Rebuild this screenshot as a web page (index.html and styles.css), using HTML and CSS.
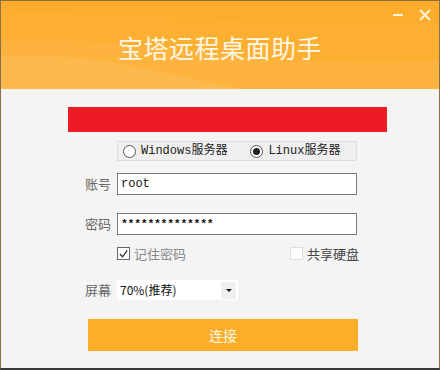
FILE: index.html
```html
<!DOCTYPE html>
<html lang="zh-CN">
<head>
    <meta charset="UTF-8">
    <title>宝塔远程桌面助手</title>
    <link rel="stylesheet" href="styles.css">
</head>
<body>
    <div class="window">
        <div class="header">
            <svg class="waves" width="438" height="88" viewBox="0 0 438 88">
                <path d="M0 40 C 120 30, 260 70, 438 60 L438 88 L0 88 Z" fill="rgba(255,255,255,0.06)"/>
                <path d="M0 55 C 90 50, 170 75, 240 88 L0 88 Z" fill="rgba(255,255,255,0.08)"/>
                <path d="M0 10 C 150 10, 300 30, 438 20 L438 88 L0 88 Z" fill="rgba(255,255,255,0.03)"/>
            </svg>
            <div class="win-controls">
                <span class="win-min"></span>
                <svg class="win-close" width="12" height="12" viewBox="0 0 12 12">
                    <path d="M1 1 L11 11 M11 1 L1 11" stroke="#fff5dc" stroke-width="2"/>
                </svg>
            </div>
            <h1>宝塔远程桌面助手</h1>
        </div>

        <div class="content">
            <div class="red-bar"></div>

            <div class="row">
                <div class="server-group">
                    <label class="radio"><span class="radio-dot"></span>Windows服务器</label>
                    <label class="radio"><span class="radio-dot checked"></span>Linux服务器</label>
                </div>
            </div>

            <div class="row field-user">
                <span class="label">账号</span>
                <div class="input">root</div>
            </div>

            <div class="row field-pass">
                <span class="label">密码</span>
                <div class="input stars">**************</div>
            </div>

            <div class="row options">
                <label class="check"><span class="box checked">
                    <svg width="12" height="12" viewBox="0 0 12 12"><path d="M2 6 L5 9 L10 2" stroke="#333" stroke-width="1.4" fill="none"/></svg>
                </span>记住密码</label>
                <label class="check share"><span class="box"></span>共享硬盘</label>
            </div>

            <div class="row field-screen">
                <span class="label">屏幕</span>
                <div class="select">
                    <span class="select-text">70%(推荐)</span>
                    <span class="select-arrow"></span>
                </div>
            </div>

            <div class="row">
                <button class="connect">连接</button>
            </div>
        </div>
    </div>
</body>
</html>
```

FILE: styles.css
```css
* {
    margin: 0;
    padding: 0;
    box-sizing: border-box;
}

body {
    font-family: "Noto Sans CJK SC", sans-serif;
    background: #f4f4f4;
}

.window {
    width: 440px;
    height: 370px;
    border: 1px solid #8a7044;
    border-bottom: 2px solid #3a3a3a;
    background: #f4f4f4;
    display: flex;
    flex-direction: column;
}

.header {
    position: relative;
    height: 88px;
    background: #fdad2b;
    display: flex;
    align-items: center;
    justify-content: center;
}

.waves {
    position: absolute;
    left: 0;
    top: 0;
}

.header h1 {
    position: relative;
    color: #fff8e8;
    font-size: 25px;
    font-weight: 400;
    letter-spacing: 0.5px;
    margin-top: 4px;
}

.win-controls {
    position: absolute;
    top: 8px;
    right: 8px;
    display: flex;
    align-items: center;
    gap: 16px;
}

.win-min {
    width: 10px;
    height: 2px;
    background: #fff5dc;
}

.content {
    flex: 1;
    display: flex;
    flex-direction: column;
    padding-top: 18px;
}

.red-bar {
    width: 319px;
    height: 25px;
    margin-left: 67px;
    background: #ed1c24;
}

.row {
    display: flex;
    align-items: center;
    padding-left: 84px;
}

.label {
    width: 32px;
    font-size: 13px;
    line-height: 16px;
    color: #666;
}

.server-group {
    margin-top: 9px;
    margin-left: 32px;
    width: 240px;
    height: 20px;
    background: #efefef;
    border: 1px solid #dcdcdc;
    display: flex;
    align-items: center;
    padding-left: 5px;
    gap: 23px;
    font-family: "Liberation Mono", "Noto Sans CJK SC", monospace;
    font-size: 12px;
    line-height: 14px;
    color: #222;
}

.radio {
    display: flex;
    align-items: center;
    gap: 5px;
}

.radio-dot {
    width: 13px;
    height: 13px;
    border: 1px solid #555;
    border-radius: 50%;
    background: #fff;
    display: flex;
    align-items: center;
    justify-content: center;
}

.radio-dot.checked::after {
    content: "";
    width: 7px;
    height: 7px;
    border-radius: 50%;
    background: #222;
}

.input {
    width: 240px;
    height: 22px;
    background: #fff;
    border: 1px solid #7a7a7a;
    padding-left: 3px;
    font-family: "Liberation Mono", monospace;
    font-size: 12px;
    line-height: 20px;
    color: #111;
}

.stars {
    font-size: 11.5px;
    font-weight: bold;
    letter-spacing: -0.3px;
}

.field-user {
    margin-top: 12px;
}

.field-pass {
    margin-top: 18px;
}

.options {
    margin-top: 12px;
    height: 13px;
    padding-left: 116px;
    width: 358px;
    justify-content: space-between;
    font-size: 13px;
    line-height: 13px;
    color: #888;
}

.check {
    display: flex;
    align-items: center;
    gap: 4px;
}

.share {
    color: #444;
}

.box {
    width: 13px;
    height: 13px;
    border: 1px solid #666;
    background: #fff;
    display: flex;
    align-items: center;
    justify-content: center;
}

.share .box {
    border-color: #ddd;
}

.field-screen {
    margin-top: 20px;
}

.select {
    width: 121px;
    height: 20px;
    background: #fff;
    display: flex;
    align-items: center;
    justify-content: space-between;
    padding: 0 2px 0 3px;
    font-size: 12px;
    line-height: 14px;
    color: #111;
}

.select-arrow {
    width: 15px;
    height: 17px;
    background: #f0f0f0;
    position: relative;
}

.select-arrow::after {
    content: "";
    position: absolute;
    left: 5px;
    top: 7px;
    border-left: 3px solid transparent;
    border-right: 3px solid transparent;
    border-top: 3px solid #111;
}

.connect {
    margin-top: 19px;
    margin-left: 3px;
    width: 270px;
    height: 32px;
    border: none;
    background: #fcad29;
    color: #fff8e6;
    font-family: "Noto Sans CJK SC", sans-serif;
    font-size: 14px;
    cursor: pointer;
}
```
